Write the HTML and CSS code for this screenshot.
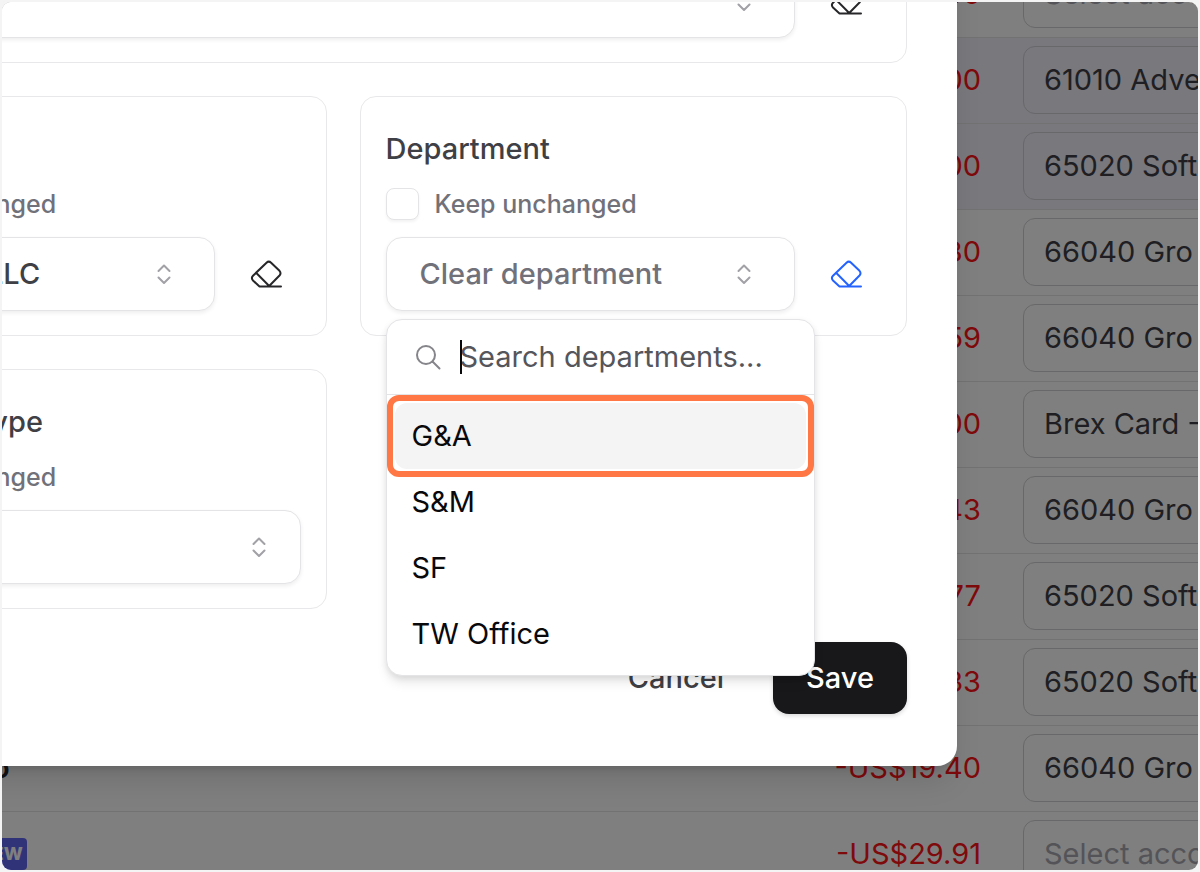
FILE: index.html
```html
<!DOCTYPE html>
<html lang="en">
<head>
<meta charset="utf-8">
<meta name="viewport" content="width=device-width, initial-scale=1">
<title>Edit transactions</title>
<link rel="stylesheet" href="styles.css">
</head>
<body>
<svg class="sprite" aria-hidden="true">
  <symbol id="eraser" viewBox="0 0 34 34">
    <path d="M9.500 29.500 3 23.500Q.8 21 3 18.700L16.500 5.700Q18.800 3.600 21.100 5.700L29.500 13.800Q31.500 16.200 29.500 18.500L18.700 29.500M9.500 29.500H31M6.300 16 18.700 28.500"/>
  </symbol>
  <symbol id="updown" viewBox="0 0 28 28">
    <path d="m8.500 11 5.500-5.500 5.500 5.500M8.500 17.500l5.500 5.500 5.500-5.500"/>
  </symbol>
</svg>
<main class="frame">
  <table class="ledger">
    <tbody>
      <tr><td class="name"></td><td class="amount">-US$12.00</td><td class="account"><select class="placeholder" aria-label="Account"><option>Select account</option></select></td></tr>
      <tr class="selected"><td class="name"></td><td class="amount">-US$50.00</td><td class="account"><select aria-label="Account"><option>61010 Advertising</option></select></td></tr>
      <tr class="selected"><td class="name"></td><td class="amount">-US$20.00</td><td class="account"><select aria-label="Account"><option>65020 Software</option></select></td></tr>
      <tr><td class="name"></td><td class="amount">-US$14.80</td><td class="account"><select aria-label="Account"><option>66040 Gro</option></select></td></tr>
      <tr><td class="name"></td><td class="amount">-US$21.59</td><td class="account"><select aria-label="Account"><option>66040 Gro</option></select></td></tr>
      <tr><td class="name"></td><td class="amount">-US$10.00</td><td class="account"><select aria-label="Account"><option>Brex Card - Main</option></select></td></tr>
      <tr><td class="name"></td><td class="amount">-US$18.43</td><td class="account"><select aria-label="Account"><option>66040 Gro</option></select></td></tr>
      <tr><td class="name"></td><td class="amount">-US$32.77</td><td class="account"><select aria-label="Account"><option>65020 Software</option></select></td></tr>
      <tr><td class="name"></td><td class="amount">-US$15.33</td><td class="account"><select aria-label="Account"><option>65020 Software</option></select></td></tr>
      <tr><td class="name"><span class="merchant">Metro</span></td><td class="amount">-US$19.40</td><td class="account"><select aria-label="Account"><option>66040 Gro</option></select></td></tr>
      <tr><td class="name"><span class="badge">NEW</span></td><td class="amount">-US$29.91</td><td class="account"><select class="placeholder" aria-label="Account"><option>Select account</option></select></td></tr>
    </tbody>
  </table>
  <div class="backdrop"></div>

  <section class="dialog" role="dialog" aria-label="Edit transactions">
    <div class="cards">
      <div class="card wide">
        <label class="title" for="account">Account</label>
        <label class="keep"><input type="checkbox">Keep unchanged</label>
        <div class="row">
          <div class="combo"><select id="account" class="control"><option></option></select><svg class="updown"><use href="#updown"/></svg></div>
          <button class="erase" type="button" aria-label="Clear account"><svg><use href="#eraser"/></svg></button>
        </div>
      </div>
      <div class="card">
        <label class="title" for="entity">Entity</label>
        <label class="keep"><input type="checkbox">Keep unchanged</label>
        <div class="row">
          <div class="combo"><select id="entity" class="control value"><option>Company, LLC</option></select><svg class="updown"><use href="#updown"/></svg></div>
          <button class="erase" type="button" aria-label="Clear entity"><svg><use href="#eraser"/></svg></button>
        </div>
      </div>
      <div class="card">
        <label class="title" for="department">Department</label>
        <label class="keep"><input type="checkbox">Keep unchanged</label>
        <div class="row">
          <div class="combo">
            <button id="department" class="control" type="button" aria-haspopup="listbox" aria-expanded="true">Clear department</button><svg class="updown"><use href="#updown"/></svg>
            <div class="popover">
              <label class="search">
                <svg viewBox="0 0 26 26"><circle cx="11" cy="11" r="9"/><path d="m17.500 17.500 7 7"/></svg>
                <span class="field"><input type="text" aria-label="Search departments" placeholder="Search departments..."><span class="caret"></span></span>
              </label>
              <ul class="options" role="listbox">
                <li class="active" role="option" aria-selected="true">G&amp;A<span class="ring"></span></li>
                <li role="option">S&amp;M</li>
                <li role="option">SF</li>
                <li role="option">TW Office</li>
              </ul>
            </div>
          </div>
          <button class="erase on" type="button" aria-label="Clear department"><svg><use href="#eraser"/></svg></button>
        </div>
      </div>
      <div class="card">
        <label class="title" for="type">Counterpart type</label>
        <label class="keep"><input type="checkbox">Keep unchanged</label>
        <div class="row">
          <div class="combo full"><select id="type" class="control"><option></option></select><svg class="updown"><use href="#updown"/></svg></div>
        </div>
      </div>
    </div>
    <footer class="actions">
      <button class="cancel" type="button">Cancel</button>
      <button class="save" type="button">Save</button>
    </footer>
  </section>
</main>
</body>
</html>
```

FILE: styles.css
```css
* { box-sizing: border-box; }

body {
  margin: 0;
  background: #f4f4f4;
  font: 400 29px/40px Inter, "Liberation Sans", sans-serif;
  font-optical-sizing: none;
  color: #27272a;
}

button, input, select { font: inherit; font-optical-sizing: none; color: inherit; margin: 0; }
button { border: 0; background: none; }

.sprite { position: absolute; width: 0; height: 0; }

svg {
  fill: none;
  stroke: currentColor;
  stroke-width: 2;
  stroke-linecap: round;
  stroke-linejoin: round;
}

.frame {
  position: relative;
  height: calc(100vh - 4px);
  margin: 2px;
  border-radius: 9px;
  background: #fff;
  overflow: hidden;
}

/* Transactions behind the dialog */
.ledger {
  width: calc(100% + 240px);
  margin: -51px 0 0 -80px;
  border-collapse: collapse;
}

.ledger td { height: 86px; padding: 0; border-bottom: 1px solid #e4e4e7; }
.ledger .selected { background: #f1f0fb; }
.ledger .name { padding-left: 5px; }
.ledger .amount { padding-right: 42px; text-align: right; color: #ff1418; white-space: nowrap; }
.ledger .account { width: 335px; }

.ledger select {
  display: block;
  width: 100%;
  height: 68px;
  padding: 0 20px;
  border: 1px solid #d0d0d4;
  border-radius: 12px;
  background: none;
  appearance: none;
  color: #3f3f46;
}

.ledger .placeholder { color: #a8a8b0; }
.merchant { font-weight: 600; }

.badge {
  display: block;
  width: max-content;
  margin-left: 48px;
  padding: 0 4px;
  border-radius: 4px;
  background: #6366f1;
  color: #fff;
  font-size: 18px;
  font-weight: 800;
  line-height: 32px;
}

.backdrop { position: absolute; inset: 0; background: rgba(0, 0, 0, .5); }

/* Dialog */
.dialog {
  position: absolute;
  top: -229px;
  left: -273px;
  right: 241px;
  padding: 50px 50px 52px;
  border-radius: 20px;
  background: #fff;
  box-shadow: 0 20px 30px -6px rgba(0, 0, 0, .12), 0 8px 12px -8px rgba(0, 0, 0, .2);
}

.cards { display: grid; grid-template-columns: 1fr 1fr; gap: 33px; }
.card { padding: 25px 25px 24px; border: 1px solid #e8e8ea; border-radius: 16px; }
.wide { grid-column: 1 / -1; }

.title {
  display: block;
  margin-bottom: 12px;
  font-weight: 450;
  line-height: 54px;
  color: #3f3f46;
}

.keep {
  display: flex;
  align-items: center;
  gap: 16px;
  margin-bottom: 17px;
  font-size: 25px;
  font-weight: 450;
  line-height: 32px;
  color: #71717a;
}

.keep input {
  width: 33px;
  height: 32px;
  border: 1px solid #e4e4e7;
  border-radius: 8px;
  background: #fff;
  box-shadow: 0 2px 3px rgba(0, 0, 0, .05);
  appearance: none;
}

.row { display: flex; gap: 18px; }
.combo { position: relative; flex: 1; }

.control {
  display: block;
  width: 100%;
  height: 74px;
  padding: 0 33px;
  border: 1px solid #e4e4e7;
  border-radius: 16px;
  background: #fff;
  box-shadow: 0 2px 4px rgba(0, 0, 0, .07);
  appearance: none;
  font-weight: 450;
  text-align: left;
  color: #71717a;
}

.value { color: #3f3f46; }

.updown {
  position: absolute;
  top: 23px;
  right: 37px;
  width: 28px;
  height: 28px;
  color: #a1a1a6;
  pointer-events: none;
}

.full .updown { right: 28px; }

.erase { display: grid; place-items: center; width: 68px; padding: 0; }
.erase svg { width: 34px; height: 34px; color: #27272a; }
.erase.on svg { color: #2563ff; }

/* Department picker */
.popover {
  position: absolute;
  z-index: 1;
  top: calc(100% + 8px);
  left: 0;
  right: -20px;
  border: 1px solid #e4e4e7;
  border-radius: 16px;
  background: #fff;
  box-shadow: 0 8px 12px -2px rgba(0, 0, 0, .1), 0 2px 6px rgba(0, 0, 0, .08);
}

.search {
  display: flex;
  align-items: center;
  gap: 18px;
  height: 75px;
  padding: 0 28px;
  border-bottom: 1px solid #e4e4e7;
}

.search svg { flex: none; width: 26px; height: 26px; color: #85858a; }
.field { position: relative; flex: 1; }

.field input {
  width: 100%;
  padding: 0 0 0 1px;
  border: 0;
  outline: 0;
  background: none;
}

.field input::placeholder { color: #55555c; opacity: 1; }

.caret { position: absolute; top: 3px; left: 1px; width: 2px; height: 34px; background: #09090b; }

.options { margin: 0; padding: 8px; list-style: none; color: #09090b; }
.options li { position: relative; padding: 13px 17px; border-radius: 12px; }
.options .active { background: #f4f4f5; }

.ring {
  position: absolute;
  inset: -8px;
  border: 6px solid #ff7744;
  border-radius: 12px;
}

.actions { display: flex; justify-content: flex-end; gap: 16px; margin-top: 33px; }
.actions button { height: 72px; padding: 0 33px; border-radius: 16px; font-weight: 500; }
.actions .cancel { color: #3f3f46; }
.actions .save { background: #18181b; color: #fff; box-shadow: 0 2px 4px rgba(0, 0, 0, .15); }
```
